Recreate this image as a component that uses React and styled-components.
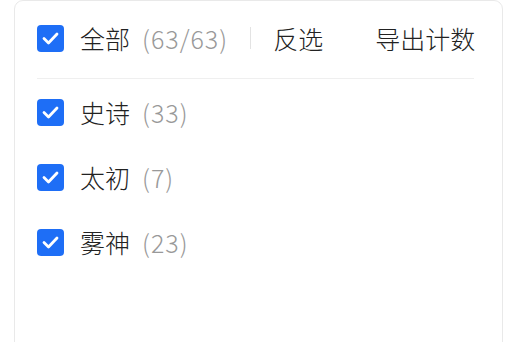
import React from "react";
import styled, { createGlobalStyle } from "styled-components";

const Global = createGlobalStyle`
  html, body { margin: 0; padding: 0; background: #fff; }
  body { font-family: "Noto Sans CJK SC", "Noto Sans", sans-serif; }
`;

const Card = styled.div`
  margin-left: 14px;
  width: 489px;
  height: 360px;
  box-sizing: border-box;
  border: 1px solid #e9e9e9;
  border-radius: 9px;
  padding: 20px 28px 0 22px;
  background: #fff;
`;

const Header = styled.div`
  display: flex;
  align-items: center;
  height: 34px;
  padding-bottom: 23px;
  border-bottom: 1px solid #efefef;
`;

const Item = styled.label`
  display: flex;
  align-items: center;
  flex: none;
  white-space: nowrap;
  height: 34px;
  font-size: 25px;
  font-weight: 300;
  color: #222;
  line-height: 34px;
`;

const Box = styled.span`
  width: 27px;
  height: 27px;
  border-radius: 4px;
  background: #1e6ef6;
  display: inline-flex;
  align-items: center;
  justify-content: center;
  margin-right: 16px;
  flex: none;
`;

const Count = styled.span`
  color: #999;
  margin-left: 12px;
  letter-spacing: 1px;
`;

const Sep = styled.span`
  flex: none;
  width: 1px;
  height: 22px;
  background: #e3e3e3;
  margin: 0 22px 0 22px;
`;

const Action = styled.span`
  flex: none;
  white-space: nowrap;
  font-size: 25px;
  font-weight: 300;
  color: #222;
  margin-left: ${(p) => p.$ml || 0}px;
`;

const List = styled.div`
  display: flex;
  flex-direction: column;
  gap: 31px;
  padding-top: 16px;
`;

const Check = () => (
  <Box>
    <svg width="17" height="13" viewBox="0 0 17 13">
      <path d="M2 6.5 L6.5 11 L15 2" fill="none" stroke="#fff" strokeWidth="2.8" strokeLinecap="round" strokeLinejoin="round" />
    </svg>
  </Box>
);

const rows = [
  ["史诗", 33],
  ["太初", 7],
  ["雾神", 23],
];

export default function App() {
  return (
    <>
      <Global />
      <Card>
        <Header>
          <Item>
            <Check />
            全部<Count>(63/63)</Count>
          </Item>
          <Sep />
          <Action>反选</Action>
          <Action $ml={52}>导出计数</Action>
        </Header>
        <List>
          {rows.map(([n, c]) => (
            <Item key={n}>
              <Check />
              {n}
              <Count>({c})</Count>
            </Item>
          ))}
        </List>
      </Card>
    </>
  );
}
